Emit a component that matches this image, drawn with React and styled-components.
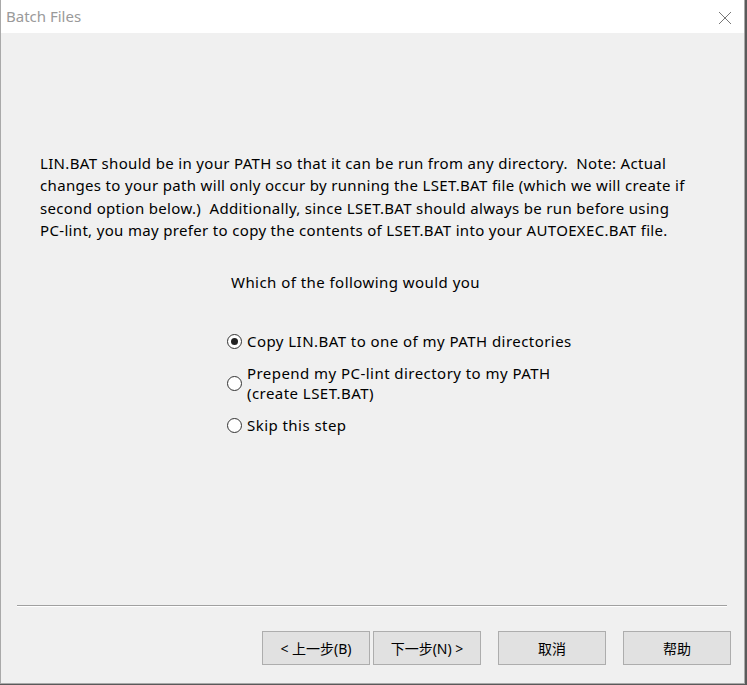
import React from 'react'
import styled, { createGlobalStyle } from 'styled-components'

const Global = createGlobalStyle`
  html, body { margin: 0; padding: 0; background: #5a5a5a; }
  body { width: 747px; height: 685px; overflow: hidden; }
`

const Window = styled.div`
  width: 745px;
  height: 684px;
  box-sizing: border-box;
  border-left: 1px solid #a9a9a9;
  border-right: 1px solid #a9a9a9;
  border-bottom: 1px solid #a9a9a9;
  background: #f0f0f0;
  display: flex;
  flex-direction: column;
  font-family: "Noto Sans", "Noto Sans CJK SC", sans-serif;
  color: #000;
`

const TitleBar = styled.div`
  height: 33px;
  background: #fff;
  display: flex;
  align-items: center;
  justify-content: space-between;
  padding: 0 12px 0 5px;
  flex-shrink: 0;
`

const Title = styled.span`
  font-size: 15px;
  color: #9a9a9a;
  margin-top: -1px;
`

const Close = styled.svg`
  width: 14px;
  height: 14px;
  margin-top: 2px;
`

const Body = styled.div`
  flex: 1;
  display: flex;
  flex-direction: column;
  padding: 119px 0 0 39px;
`

const Text = styled.div`
  font-size: 15px;
  letter-spacing: ${p => p.$spacing || 0.45}px;
  white-space: nowrap;
`

const Paragraph = styled(Text)`
  line-height: 22.3px;
`

const Question = styled(Text)`
  margin: 30px 0 0 191px;
  line-height: 22px;
`

const Options = styled.div`
  margin: 38px 0 0 187px;
  display: flex;
  flex-direction: column;
  gap: 12px;
`

const Option = styled(Text).attrs({ as: 'label' })`
  display: flex;
  align-items: center;
  gap: 5px;
  line-height: 20px;
`

const Radio = styled.span`
  width: 13px;
  height: 13px;
  border: 1px solid #333;
  border-radius: 50%;
  background: #fff;
  display: flex;
  align-items: center;
  justify-content: center;
  flex-shrink: 0;
  &::after {
    content: '';
    width: 7px;
    height: 7px;
    border-radius: 50%;
    background: ${p => (p.$checked ? '#222' : 'transparent')};
  }
`

const Spacer = styled.div`
  flex: 1;
`

const Separator = styled.div`
  margin: 0 17px 0 16px;
  border-top: 1px solid #a0a0a0;
  border-bottom: 1px solid #fff;
  height: 0;
`

const ButtonRow = styled.div`
  display: flex;
  justify-content: flex-end;
  padding: 24px 13px 18px 0;
`

const Button = styled.button`
  width: 108px;
  height: 34px;
  margin-left: ${p => p.$gap || 0}px;
  background: #e1e1e1;
  border: 1px solid #adadad;
  font-family: "Noto Sans", "Noto Sans CJK SC", sans-serif;
  font-size: 14px;
  color: #000;
  padding: 0;
`

export default function App() {
  return (
    <>
      <Global />
      <Window>
        <TitleBar>
          <Title>Batch Files</Title>
          <Close viewBox="0 0 14 14">
            <path d="M1 1 L13 13 M13 1 L1 13" stroke="#777" strokeWidth="1" fill="none" />
          </Close>
        </TitleBar>
        <Body>
          <Paragraph $spacing={0.33}>
            LIN.BAT should be in your PATH so that it can be run from any directory.&nbsp; Note: Actual
            <br />
            changes to your path will only occur by running the LSET.BAT file (which we will create if
            <br />
            second option below.)&nbsp; Additionally, since LSET.BAT should always be run before using
            <br />
            PC-lint, you may prefer to copy the contents of LSET.BAT into your AUTOEXEC.BAT file.
          </Paragraph>
          <Question>Which of the following would you</Question>
          <Options>
            <Option>
              <Radio $checked />
              Copy LIN.BAT to one of my PATH directories
            </Option>
            <Option>
              <Radio />
              <span>
                Prepend my PC-lint directory to my PATH
                <br />
                (create LSET.BAT)
              </span>
            </Option>
            <Option>
              <Radio />
              Skip this step
            </Option>
          </Options>
          <Spacer />
        </Body>
        <Separator />
        <ButtonRow>
          <Button>&lt; 上一步(B)</Button>
          <Button $gap={3}>下一步(N) &gt;</Button>
          <Button $gap={17}>取消</Button>
          <Button $gap={17}>帮助</Button>
        </ButtonRow>
      </Window>
    </>
  )
}
